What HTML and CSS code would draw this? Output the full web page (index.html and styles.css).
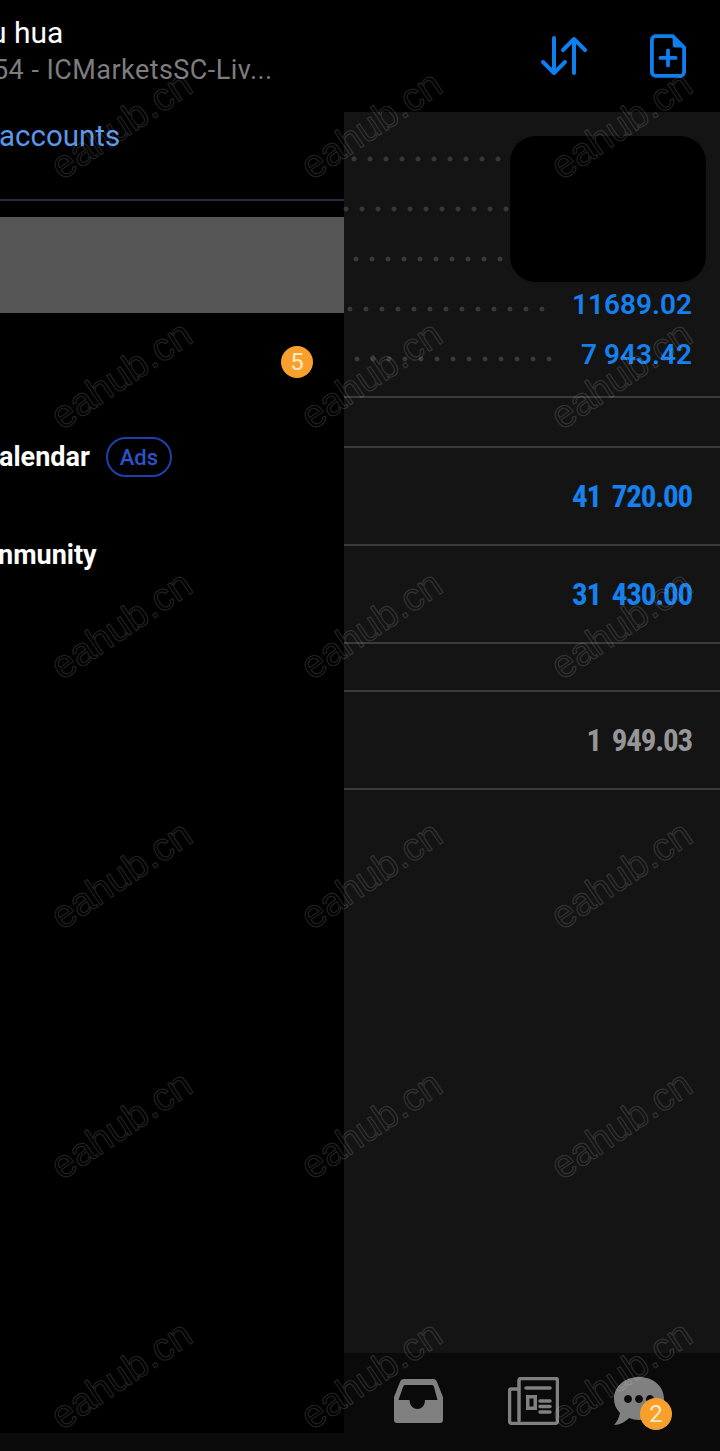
FILE: index.html
```html
<!DOCTYPE html>
<html lang="en">
<head>
<meta charset="utf-8">
<title>Accounts</title>
<link rel="stylesheet" href="styles.css">
</head>
<body>
<div class="screen">
  <aside class="drawer">
    <div class="profile">
      <div class="name">u hua</div>
      <div class="server">54 - ICMarketsSC-Liv...</div>
      <div class="manage">accounts</div>
    </div>
    <div class="selected"></div>
    <div class="menu-row menu-row-badge"><span class="badge">5</span></div>
    <div class="menu-row"><span class="menu-text">alendar</span><span class="ads">Ads</span></div>
    <div class="menu-row"><span class="menu-text menu-text-community">nmunity</span></div>
  </aside>
  <div class="content">
    <header class="topbar">
      <svg class="sort-icon" viewBox="0 0 48 40" aria-hidden="true">
        <path d="M14 2V36M3 26 14 37 25 26M34 37V3M23 14 34 3 45 14"/>
      </svg>
      <svg class="file-icon" viewBox="0 0 38 46" aria-hidden="true">
        <path class="file-outline" d="M5 2H24L36 14V40a4 4 0 0 1-4 4H6a4 4 0 0 1-4-4V6a4 4 0 0 1 4-4Z"/>
        <path class="file-fold" d="M24 1 37 14H27a3 3 0 0 1-3-3Z"/>
        <path class="file-outline" d="M11 25H27M19 17V33"/>
      </svg>
    </header>
    <main class="panel">
      <div class="summary">
        <div class="sum-row"><i class="dots dots-a"></i></div>
        <div class="sum-row"><i class="dots dots-b"></i></div>
        <div class="sum-row"><i class="dots dots-c"></i></div>
        <div class="sum-row"><i class="dots dots-d"></i><span class="value">11689.02</span></div>
        <div class="sum-row"><i class="dots dots-e"></i><span class="value">7 943.42</span></div>
        <div class="masked"></div>
      </div>
      <div class="row row-first"></div>
      <div class="row"><span class="amount">41 720.00</span></div>
      <div class="row"><span class="amount">31 430.00</span></div>
      <div class="row row-short"></div>
      <div class="row"><span class="amount amount-muted">1 949.03</span></div>
    </main>
    <nav class="tabbar">
      <svg class="inbox-icon" viewBox="0 0 49 44" aria-hidden="true">
        <path fill-rule="evenodd" d="M10 0H39Q42 0 43 3L49 18V41Q49 44 46 44H3Q0 44 0 41V18L6 3Q7 0 10 0ZM11 6Q9.500 6 9 8L4.500 21H15.500C16 33 31 33 31 21H43.500L40 8Q39.500 6 38 6Z"/>
      </svg>
      <svg class="news-icon" viewBox="0 0 51 48" aria-hidden="true">
        <path class="news-line" d="M11 12H3.500A2 2 0 0 0 1.500 14V44A2.500 2.500 0 0 0 4 46.500H47A2.500 2.500 0 0 0 49.500 44V3.500A2 2 0 0 0 47.500 1.500H13A2 2 0 0 0 11 3.500V43.500"/>
        <path class="news-line" d="M18 11H42M32 24H42M32 29.500H42M32 35H42"/>
        <path class="news-block" d="M18 18H29V33H18ZM21.500 21.500V29.500H25.500V21.500Z"/>
      </svg>
      <span class="chat">
        <svg class="chat-icon" viewBox="0 0 50 48" aria-hidden="true">
          <path fill-rule="evenodd" d="M25 0C39 0 50 9 50 22S39 43 25 43C21 43 18 42 15 41 11 45 6 48 0 48 3 45 5 41 6 36 2 32 0 27 0 22 0 9 11 0 25 0ZM14 18a4 4 0 1 0 .01 0ZM25 18a4 4 0 1 0 .01 0ZM36 18a4 4 0 1 0 .01 0Z"/>
        </svg>
        <span class="badge chat-badge">2</span>
      </span>
    </nav>
  </div>
  <div class="watermarks" aria-hidden="true">
    <span>eahub.cn</span><span>eahub.cn</span><span>eahub.cn</span>
    <span>eahub.cn</span><span>eahub.cn</span><span>eahub.cn</span>
    <span>eahub.cn</span><span>eahub.cn</span><span>eahub.cn</span>
    <span>eahub.cn</span><span>eahub.cn</span><span>eahub.cn</span>
    <span>eahub.cn</span><span>eahub.cn</span><span>eahub.cn</span>
    <span>eahub.cn</span><span>eahub.cn</span><span>eahub.cn</span>
  </div>
</div>
</body>
</html>
```
FILE: styles.css
```css
* { box-sizing: border-box; }
html, body { margin: 0; height: 100%; background: #0a0a0a; }
body { font-family: Roboto, "Liberation Sans", sans-serif; overflow: hidden; }

.screen {
  position: relative;
  display: flex;
  align-items: flex-start;
  width: 720px;
  height: 1451px;
  overflow: hidden;
  background: #0a0a0a;
}

/* Drawer */
.drawer {
  width: 344px;
  height: 1433px;
  flex: none;
  background: #000;
  overflow: hidden;
}
.profile {
  height: 201px;
  padding-top: 14px;
  border-bottom: 2px solid #2c2a3c;
  white-space: nowrap;
}
.name { margin-left: -10px; font-size: 30px; line-height: 38px; color: #fff; }
.server { margin-left: -7px; font-size: 27px; line-height: 36px; letter-spacing: .45px; color: #7d7d7d; }
.manage { margin-top: 29px; margin-left: -1px; font-size: 29.500px; line-height: 38px; font-weight: 400; color: #5a97ea; }
.selected { height: 96px; margin-top: 16px; background: #555; }
.menu-row {
  display: flex;
  align-items: center;
  gap: 16px;
  height: 98px;
  color: #fff;
  white-space: nowrap;
}
.menu-row-badge { justify-content: flex-end; height: 95px; padding: 3px 31px 0 0; }
.menu-text { font-size: 27px; font-weight: 700; margin-left: -1px; }
.menu-text-community { margin-left: -2px; }
.badge {
  display: flex;
  align-items: center;
  justify-content: center;
  width: 32px;
  height: 32px;
  border-radius: 50%;
  background: #f8a02b;
  color: #fde9c8;
  font-size: 24px;
}
.ads {
  display: flex;
  align-items: center;
  justify-content: center;
  width: 66px;
  height: 40px;
  border: 2px solid #1f3fae;
  border-radius: 20px;
  color: #2c52c8;
  font-size: 22px;
  font-weight: 500;
}

/* Right column */
.content { flex: 1; height: 1451px; display: flex; flex-direction: column; }
.topbar {
  height: 112px;
  flex: none;
  background: #000;
  display: flex;
  align-items: flex-start;
  padding: 34px 0 0 196px;
  gap: 62px;
}
.sort-icon { width: 48px; height: 40px; margin-top: 2px; fill: none; stroke: #0f7ff0; stroke-width: 4; stroke-linecap: round; stroke-linejoin: round; }
.file-icon { width: 36px; height: 44px; }
.file-outline { fill: none; stroke: #0f7ff0; stroke-width: 4; stroke-linecap: round; stroke-linejoin: round; }
.file-fold { fill: #0f7ff0; }

.panel { flex: 1; background: #141414; padding-top: 22px; }
.summary { position: relative; height: 264px; border-bottom: 2px solid #3a3a3a; }
.sum-row { display: flex; justify-content: flex-end; align-items: center; height: 50px; padding-right: 28px; position: relative; }
.dots {
  position: absolute;
  top: 22px;
  height: 6px;
  background: radial-gradient(circle at 3px 3px, #383838 2.1px, transparent 2.8px) 0 0 / 16px 6px repeat-x;
}
.dots-a { left: 7px; width: 150px; }
.dots-b { left: -1px; width: 166px; }
.dots-c { left: 9px; width: 150px; }
.dots-d { left: 3px; width: 198px; }
.dots-e { left: 10px; width: 198px; }
.value { font-size: 28px; font-weight: 600; color: #1580ee; position: relative; top: -5px; }
.masked { position: absolute; left: 166px; top: 2px; width: 196px; height: 146px; border-radius: 26px; background: #000; }

.row {
  display: flex;
  justify-content: flex-end;
  align-items: center;
  height: 98px;
  padding-right: 28px;
  border-bottom: 2px solid #3a3a3a;
}
.row-first { height: 50px; }
.row-short { height: 48px; }
.amount {
  font-family: "Roboto Condensed", Roboto, sans-serif;
  font-stretch: 75%;
  font-size: 31px;
  font-weight: 700;
  letter-spacing: -1.200px;
  word-spacing: 5px;
  color: #1580ee;
}
.amount-muted { color: #969696; }

.tabbar {
  height: 98px;
  flex: none;
  background: #0a0a0a;
  display: flex;
  align-items: flex-start;
  padding: 24px 0 0 50px;
  fill: #808080;
}
.inbox-icon { width: 49px; height: 44px; margin-top: 2px; }
.news-icon { width: 51px; height: 48px; margin-left: 65px; }
.news-line { fill: none; stroke: #808080; stroke-width: 3.500; stroke-linecap: round; stroke-linejoin: round; }
.chat { position: relative; display: block; width: 50px; height: 48px; margin-left: 55px; }
.chat-icon { display: block; width: 50px; height: 48px; }
.chat-badge { position: absolute; left: 26px; top: 21px; }

/* Watermark overlay */
.watermarks {
  position: absolute;
  inset: 0;
  display: grid;
  grid-template-columns: repeat(3, 250px);
  grid-auto-rows: 250px;
  margin-left: -4px;
  pointer-events: none;
}
.watermarks span {
  align-self: center;
  justify-self: center;
  transform: rotate(-34deg);
  font-family: "Liberation Sans", sans-serif;
  font-size: 39px;
  color: transparent;
  -webkit-text-stroke: 1.200px rgba(255,255,255,.14);
}
```
